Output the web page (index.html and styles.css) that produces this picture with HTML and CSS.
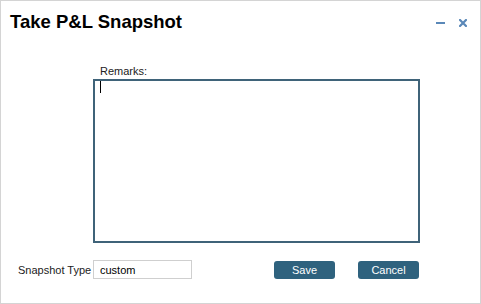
FILE: index.html
```html
<!DOCTYPE html>
<html>
<head>
<meta charset="utf-8">
<link rel="stylesheet" href="styles.css">
</head>
<body>
<div class="dialog">
  <div class="header">
    <div class="title">Take P&amp;L Snapshot</div>
    <div class="tools">
      <svg class="ico" width="9" height="8" viewBox="0 0 9 8"><rect x="0" y="3" width="9" height="2" fill="#5a88b8"/></svg>
      <svg class="ico" width="8" height="8" viewBox="0 0 8 8"><path d="M1 1 L7 7 M7 1 L1 7" stroke="#5a88b8" stroke-width="2.2" stroke-linecap="square"/></svg>
    </div>
  </div>
  <div class="remarks">
    <div class="label">Remarks:</div>
    <div class="area-wrap">
      <textarea class="area"></textarea>
      <span class="caret"></span>
    </div>
  </div>
  <div class="bottom">
    <span class="type-label">Snapshot Type</span>
    <input class="type-input" type="text" value="custom">
    <button class="btn save">Save</button>
    <button class="btn cancel">Cancel</button>
  </div>
</div>
</body>
</html>
```
FILE: styles.css
```css
html, body { margin: 0; padding: 0; background: #fff; }
.dialog {
  width: 481px; height: 304px; box-sizing: border-box;
  border: 1px solid #d4d4d4;
  font-family: "Liberation Sans", Arial, sans-serif;
  display: flex; flex-direction: column;
}
.header {
  display: flex; justify-content: space-between; align-items: flex-start;
  height: 64px; box-sizing: border-box;
  padding: 11px 13px 0 9px;
}
.title { font-size: 18.5px; font-weight: bold; line-height: 20px; color: #000; }
.tools { display: flex; gap: 14px; padding-top: 7px; padding-left: 0; margin-right: 0; }
.ico { display: block; }
.ico:first-child { margin-left: 1px; }
.remarks { padding-left: 92px; }
.label { font-size: 11px; line-height: 13px; color: #222; padding-left: 7px; margin-bottom: 1px; }
.area-wrap { position: relative; width: 327px; height: 164px; }
.area {
  display: block; width: 327px; height: 164px; box-sizing: border-box;
  border: 2px solid #3f6379; margin: 0; padding: 0; resize: none; outline: none;
}
.caret { position: absolute; left: 7px; top: 2px; width: 1px; height: 12px; background: #000; }
.bottom {
  display: flex; align-items: center; margin-top: 17px; padding-left: 17px; height: 19px;
}
.type-label { width: 75px; font-size: 11px; color: #222; white-space: nowrap; }
.type-input {
  width: 99px; height: 19px; box-sizing: border-box; margin: 0;
  border: 1px solid #cfcfcf; padding: 0 6px;
  font-family: "Liberation Sans", Arial, sans-serif; font-size: 11px; color: #000;
  outline: none;
}
.btn {
  width: 61px; height: 18px; box-sizing: border-box; margin: 1px 0 0 0; padding: 0;
  border: none; border-radius: 3px; background: #2f627e; color: #fff;
  font-family: "Liberation Sans", Arial, sans-serif; font-size: 11px; line-height: 18px;
}
.save { margin-left: 82px; }
.cancel { margin-left: 23px; }
```
